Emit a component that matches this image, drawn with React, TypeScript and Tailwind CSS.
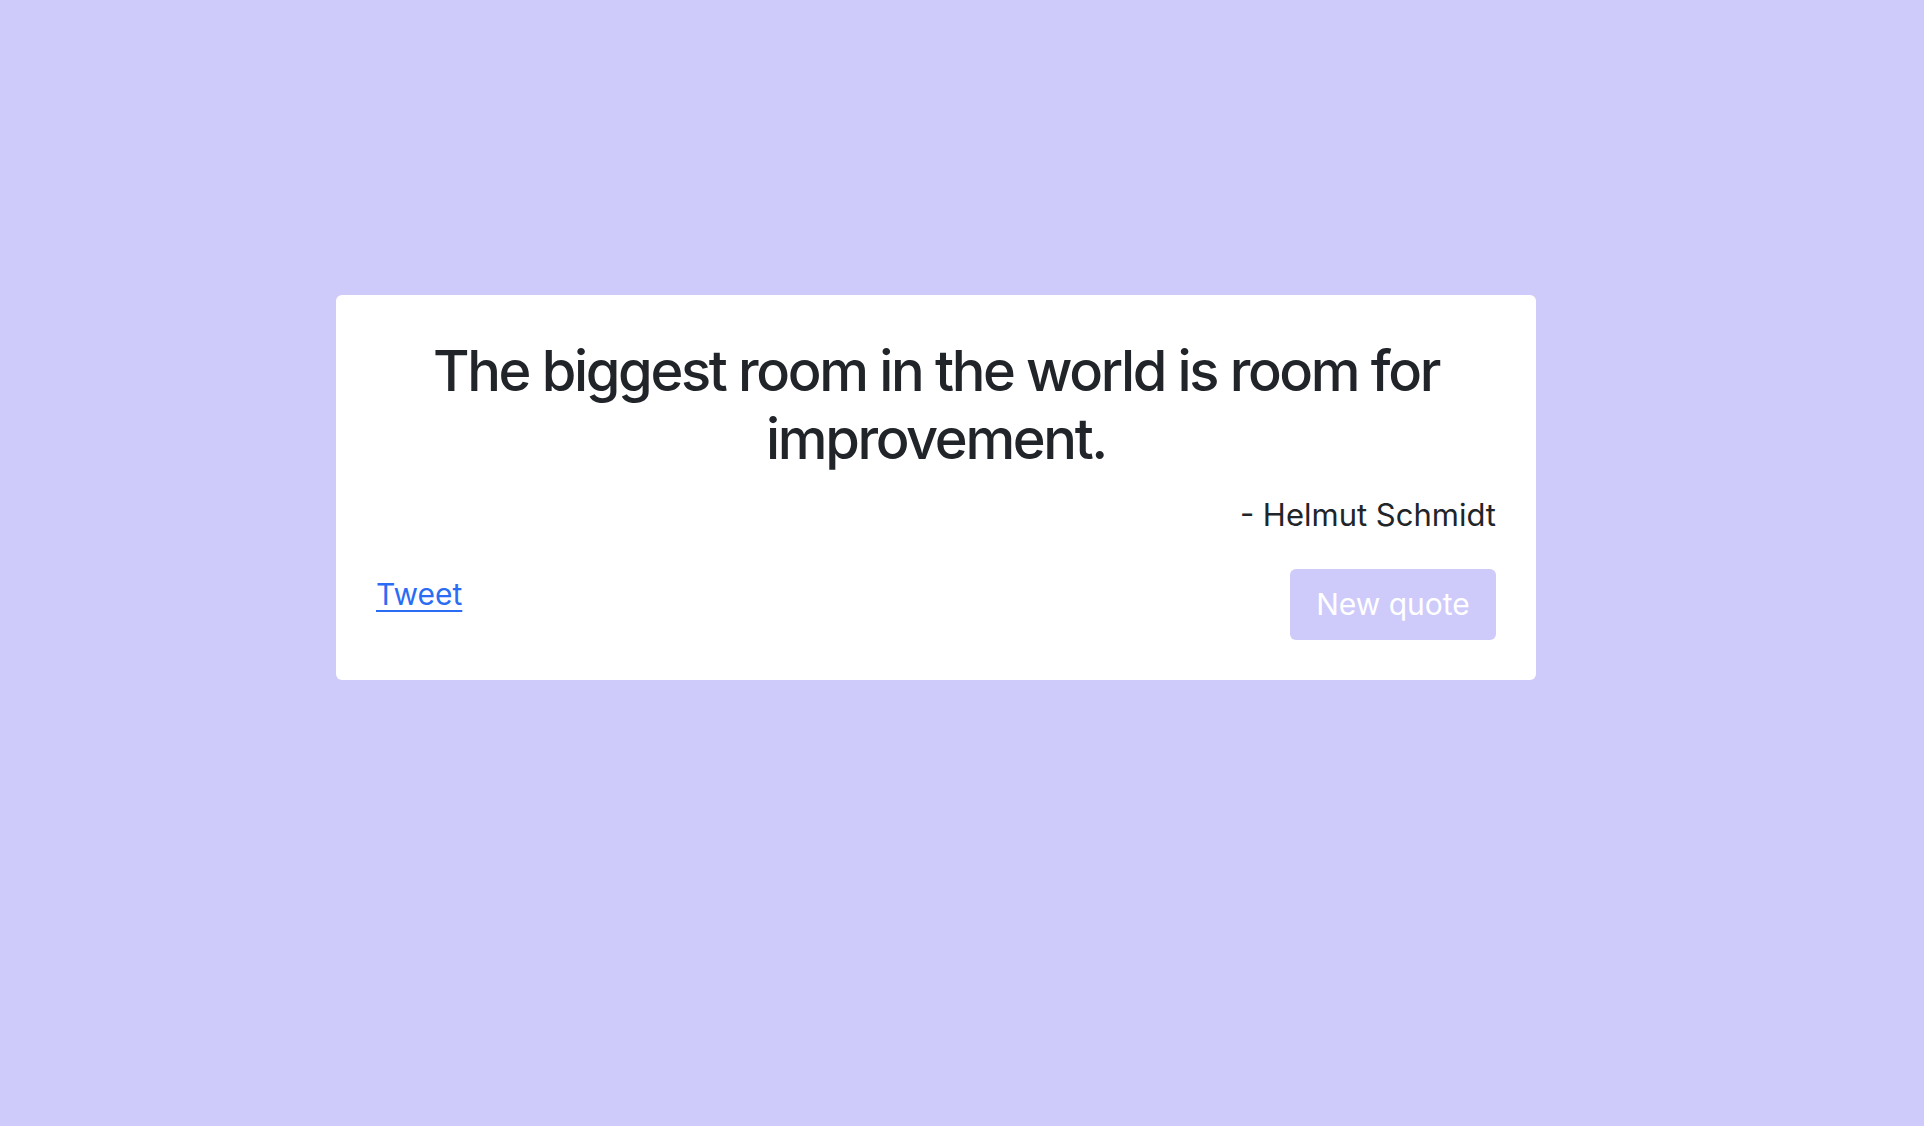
const quote = {
  text: "The biggest room in the world is room for improvement.",
  author: "Helmut Schmidt",
};

export default function App() {
  return (
    <div
      className="min-h-screen w-full bg-[#cecbfa] pt-[295px]"
      style={{ fontFamily: "Inter, 'Noto Sans', 'Liberation Sans', sans-serif" }}
    >
      <div id="quote-box" className="ml-[336px] w-[1200px] rounded-md bg-white px-10 pt-[42px] pb-[40px] text-[#212529]">
        <h1 id="text" className="text-center text-[56px] font-[550] leading-[1.22] tracking-[-0.042em]">
          {quote.text}
        </h1>
        <p id="author" className="mt-[22px] text-right text-[31px] leading-[1.2]">
          - {quote.author}
        </p>
        <div className="mt-[36px] flex items-start justify-between">
          <a
            id="tweet-quote"
            href="#"
            className="mt-[3px] text-[30px] leading-[1.5] text-[#2a6df4] underline decoration-2 underline-offset-[5px]"
          >
            Tweet
          </a>
          <button
            id="new-quote"
            className="h-[71px] w-[206px] rounded-md bg-[#cecbfa] text-[30px] leading-[1.5] text-white"
          >
            New quote
          </button>
        </div>
      </div>
    </div>
  );
}
